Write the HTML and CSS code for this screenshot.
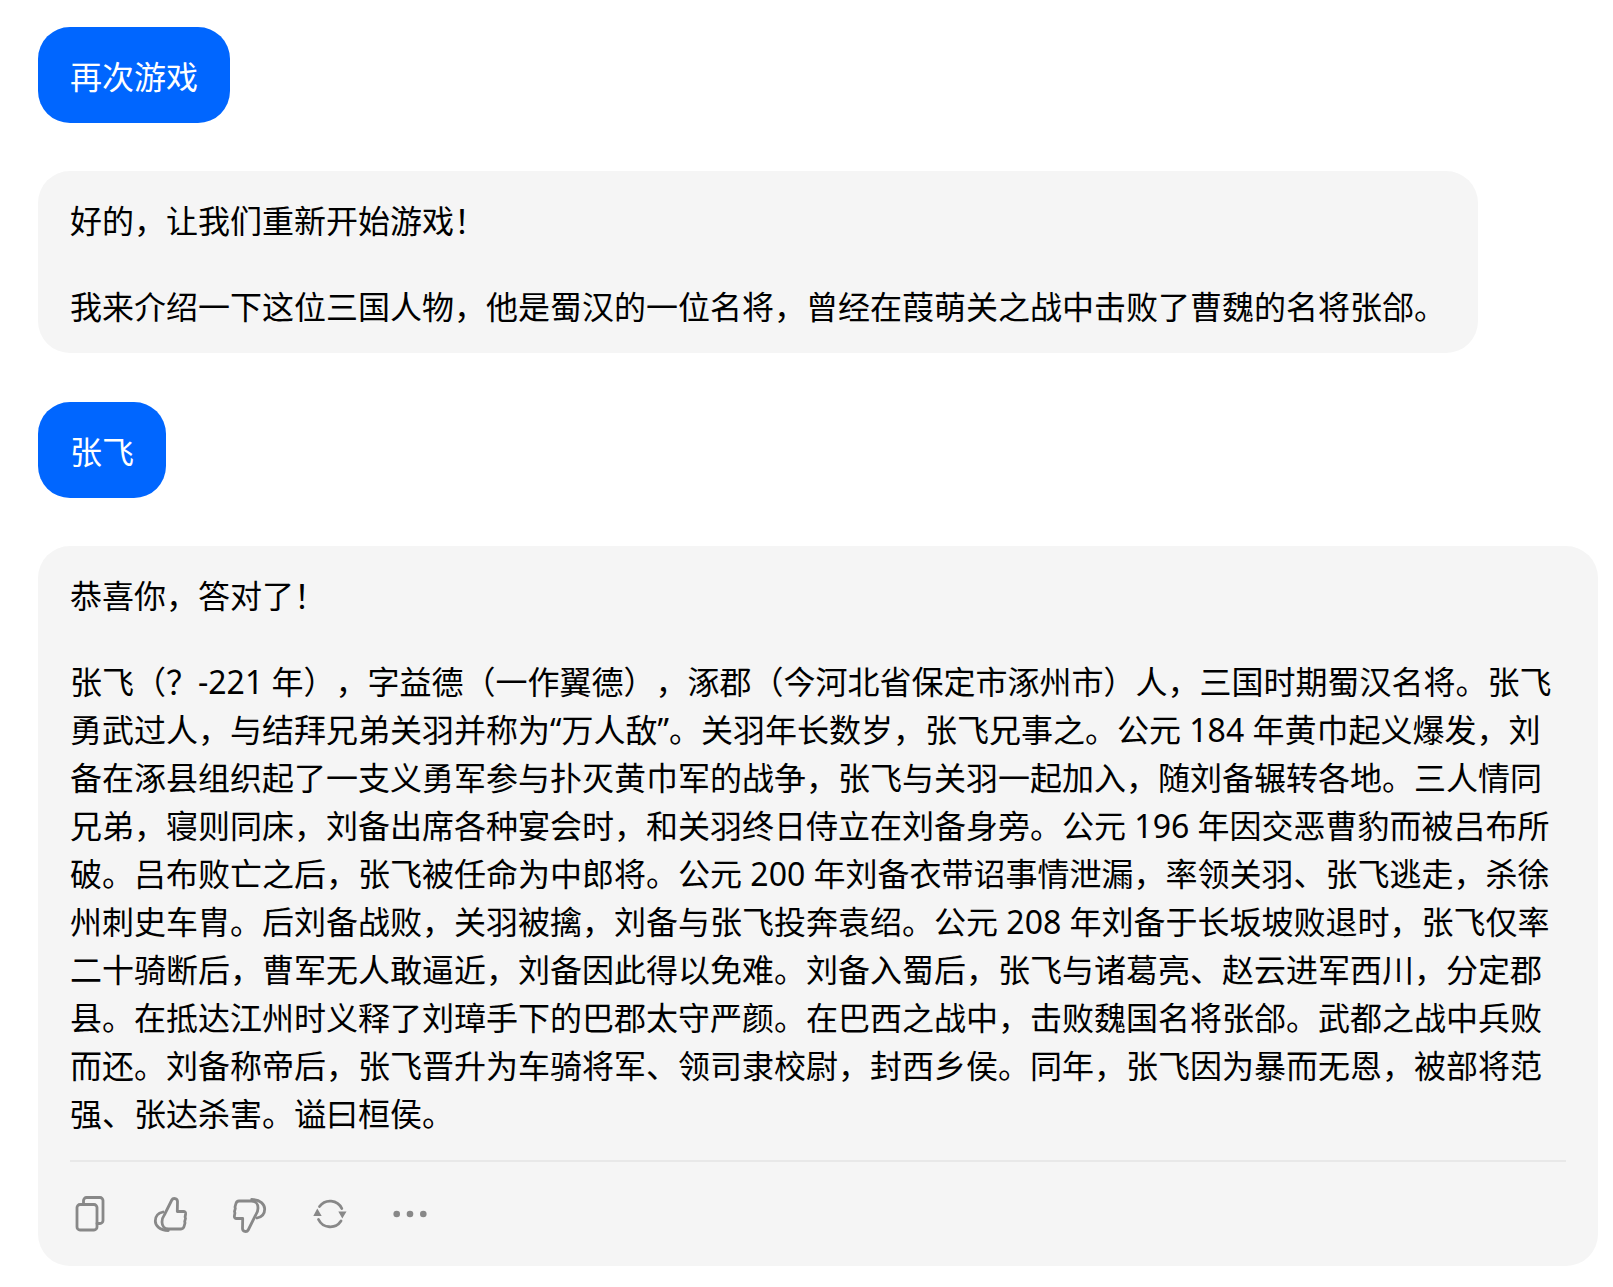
FILE: index.html
```html
<!DOCTYPE html>
<html lang="zh-CN">
<head>
<meta charset="utf-8">
<title>再次游戏</title>
<link rel="stylesheet" href="styles.css">
</head>
<body>
<main class="chat">
  <div class="bubble user">再次游戏</div>
  <div class="bubble bot narrow">
    <p>好的，让我们重新开始游戏！</p>
    <p>我来介绍一下这位三国人物，他是蜀汉的一位名将，曾经在葭萌关之战中击败了曹魏的名将张郃。</p>
  </div>
  <div class="bubble user">张飞</div>
  <div class="bubble bot wide">
    <p>恭喜你，答对了！</p>
    <p>张飞（？-221 年），字益德（一作翼德），涿郡（今河北省保定市涿州市）人，三国时期蜀汉名将。张飞勇武过人，与结拜兄弟关羽并称为“万人敌”。关羽年长数岁，张飞兄事之。公元 184 年黄巾起义爆发，刘备在涿县组织起了一支义勇军参与扑灭黄巾军的战争，张飞与关羽一起加入，随刘备辗转各地。三人情同兄弟，寝则同床，刘备出席各种宴会时，和关羽终日侍立在刘备身旁。公元 196 年因交恶曹豹而被吕布所破。吕布败亡之后，张飞被任命为中郎将。公元 200 年刘备衣带诏事情泄漏，率领关羽、张飞逃走，杀徐州刺史车胄。后刘备战败，关羽被擒，刘备与张飞投奔袁绍。公元 208 年刘备于长坂坡败退时，张飞仅率二十骑断后，曹军无人敢逼近，刘备因此得以免难。刘备入蜀后，张飞与诸葛亮、赵云进军西川，分定郡县。在抵达江州时义释了刘璋手下的巴郡太守严颜。在巴西之战中，击败魏国名将张郃。武都之战中兵败而还。刘备称帝后，张飞晋升为车骑将军、领司隶校尉，封西乡侯。同年，张飞因为暴而无恩，被部将范强、张达杀害。谥曰桓侯。</p>
    <div class="actions">
      <svg class="icon" viewBox="0 0 40 40"><rect x="7" y="10.500" width="20" height="25.500" rx="3"/><path d="M13.500 10.500V6.500a3 3 0 0 1 3-3H30a3 3 0 0 1 3 3v20a3 3 0 0 1-3 3h-3"/></svg>
      <svg class="icon" viewBox="0 0 40 40"><path d="M27.300 17.500H33.500c1.500 0 2.300 1 2.100 2.500l-.5 3 .4 1.500-.8 3 .3 1.500-.8 3c-.5 2-1.500 3-3.200 3H18.500c-4 0-6.500-3-6.500-7 0-3 .8-5 2.300-7l7.500-15c1.300-2.500 5.700-1.800 5.700 1.500z"/><path d="M13 18c-4.800 1-7.700 4.500-7.700 9s4.200 9.500 13 9.500"/></svg>
      <svg class="icon" viewBox="0 0 40 40"><g transform="rotate(180 20 21)"><path d="M27.300 17.500H33.500c1.500 0 2.300 1 2.100 2.500l-.5 3 .4 1.500-.8 3 .3 1.500-.8 3c-.5 2-1.500 3-3.200 3H18.500c-4 0-6.500-3-6.500-7 0-3 .8-5 2.300-7l7.500-15c1.300-2.500 5.700-1.800 5.700 1.500z"/><path d="M13 18c-4.800 1-7.700 4.500-7.700 9s4.200 9.500 13 9.500"/></g></svg>
      <svg class="icon" viewBox="0 0 40 40"><path d="M9.500 12.500A13 13 0 0 1 31.800 14.500"/><path d="M31 27A13 13 0 0 1 8.500 25.500"/><path class="fill" d="M7.300 14.500L11.700 22H3.300zM32.300 24.500L36.500 17.500H28.300z"/></svg>
      <svg class="icon" viewBox="0 0 40 40"><circle class="fill" cx="6.700" cy="20" r="3.300"/><circle class="fill" cx="20" cy="20" r="3.300"/><circle class="fill" cx="33.300" cy="20" r="3.300"/></svg>
    </div>
  </div>
</main>
</body>
</html>
```

FILE: styles.css
```css
* { box-sizing: border-box; }
html, body { margin: 0; background: #fff; }
body {
  font-family: "Noto Sans", "Noto Sans CJK SC", sans-serif;
  font-size: 32px;
  line-height: 48px;
  color: #000;
  text-spacing-trim: space-all;
}
.chat {
  display: flex;
  flex-direction: column;
  align-items: flex-start;
  gap: 48px;
  padding: 27px 15px 21px 38px;
}
.bubble {
  padding: 26px 32px 22px;
  border-radius: 32px;
}
.user { background: #0066ff; color: #fff; }
.bot { background: #f5f5f5; }
.narrow { width: 1440px; margin-bottom: 1px; }
.wide { width: 1560px; padding-bottom: 32px; }
p { margin: 0; }
p + p { margin-top: 38px; }
.actions {
  display: flex;
  gap: 40px;
  margin-top: 22px;
  padding-top: 32px;
  border-top: 2px solid #e8e8e8;
}
.icon {
  width: 40px;
  height: 40px;
  fill: none;
  stroke: #888;
  stroke-width: 2.800;
  stroke-linejoin: round;
  stroke-linecap: round;
}
.icon .fill { fill: #888; stroke: none; }
```
